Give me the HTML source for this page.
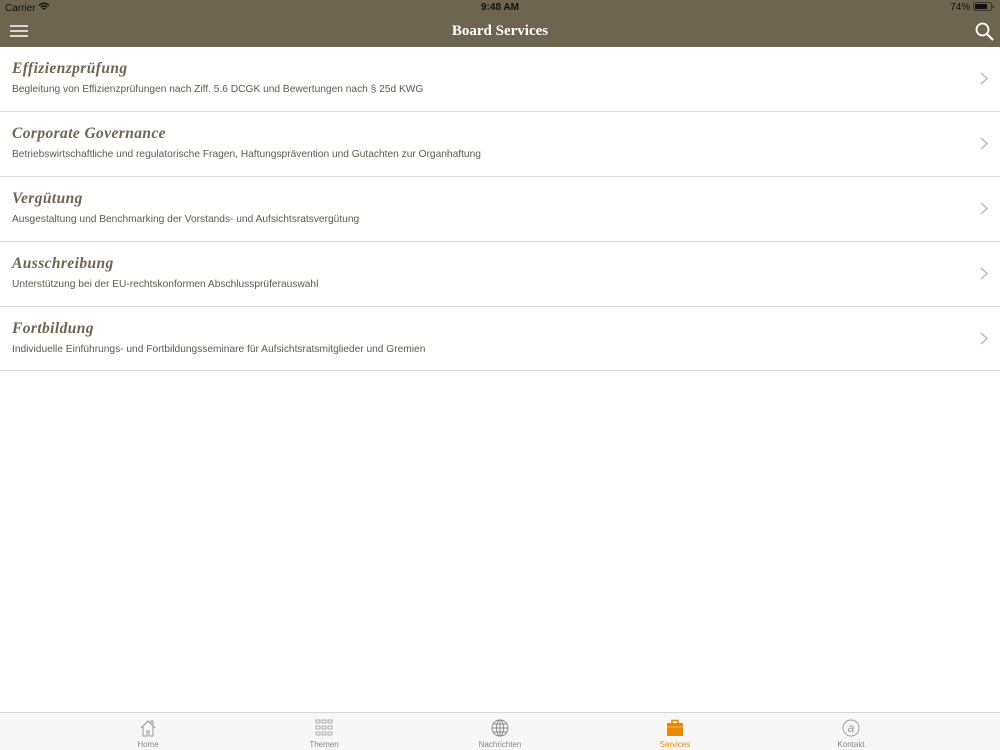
<!DOCTYPE html>
<html><head><meta charset="utf-8"><style>
*{margin:0;padding:0;box-sizing:border-box}
body{width:1000px;height:750px;background:#fff;font-family:"Liberation Sans",sans-serif;position:relative;overflow:hidden}
.top{position:absolute;left:0;top:0;width:1000px;height:47px;background:#6d6550}
.sb{position:absolute;top:2px;font-size:10px;color:#111}
.title{position:absolute;top:23px;left:0;width:1000px;text-align:center;color:#fff;font-family:"Liberation Serif",serif;font-weight:bold;font-size:15px}
.row{position:absolute;left:0;width:1000px;height:65px;border-bottom:1px solid #dcdcdc}
.row h2{position:absolute;left:12px;top:13px;font-family:"Liberation Serif",serif;font-style:italic;font-weight:bold;font-size:15.5px;color:#6d6550;letter-spacing:.4px}
.row p{position:absolute;left:12px;top:37px;font-size:10.2px;color:#5e5a4c}
.row svg{position:absolute;right:12px;top:25px}
.tab{position:absolute;top:712px;left:0;width:1000px;height:38px;background:#f7f7f7;border-top:1px solid #d8d8d8}
.t{position:absolute;top:0;width:80px;text-align:center;font-size:8px;color:#888}
.t svg{display:block;margin:6px auto 3px}
</style></head><body>
<div class="top">
<div class="sb" style="left:5px">Carrier <svg width="12" height="9" viewBox="0 0 12 9"><path d="M1 3.5Q6 -1 11 3.5M2.8 5.3Q6 2.5 9.2 5.3M4.6 7Q6 6 7.4 7" stroke="#111" stroke-width="1.4" fill="none"/></svg></div>
<div class="sb" style="left:0;width:1000px;text-align:center;font-weight:bold">9:48 AM</div>
<div class="sb" style="right:5px">74% <svg width="22" height="9" viewBox="0 0 22 9" style="vertical-align:-1px"><rect x=".5" y=".5" width="18" height="8" rx="2" fill="none" stroke="#333"/><rect x="2" y="2" width="12" height="5" fill="#111"/><rect x="19.5" y="3" width="1.5" height="3" fill="#333"/></svg></div>
<svg style="position:absolute;left:10px;top:25px" width="18" height="12"><path d="M0 1H18M0 6H18M0 11H18" stroke="#fff" stroke-width="1.6"/></svg>
<div class="title">Board Services</div>
<svg style="position:absolute;left:975px;top:22px" width="19" height="19" viewBox="0 0 19 19"><circle cx="7.5" cy="7.5" r="6" stroke="#fff" stroke-width="1.8" fill="none"/><path d="M12 12L18 18" stroke="#fff" stroke-width="2"/></svg>
</div>

<div class="row" style="top:47px"><h2>Effizienzprüfung</h2><p>Begleitung von Effizienzprüfungen nach Ziff. 5.6 DCGK und Bewertungen nach § 25d KWG</p><svg width="8" height="13"><path d="M1 1L7 6.5L1 12" stroke="#bbb" stroke-width="1.5" fill="none"/></svg></div>
<div class="row" style="top:112px"><h2>Corporate Governance</h2><p>Betriebswirtschaftliche und regulatorische Fragen, Haftungsprävention und Gutachten zur Organhaftung</p><svg width="8" height="13"><path d="M1 1L7 6.5L1 12" stroke="#bbb" stroke-width="1.5" fill="none"/></svg></div>
<div class="row" style="top:177px"><h2>Vergütung</h2><p>Ausgestaltung und Benchmarking der Vorstands- und Aufsichtsratsvergütung</p><svg width="8" height="13"><path d="M1 1L7 6.5L1 12" stroke="#bbb" stroke-width="1.5" fill="none"/></svg></div>
<div class="row" style="top:242px"><h2>Ausschreibung</h2><p>Unterstützung bei der EU-rechtskonformen Abschlussprüferauswahl</p><svg width="8" height="13"><path d="M1 1L7 6.5L1 12" stroke="#bbb" stroke-width="1.5" fill="none"/></svg></div>
<div class="row" style="top:307px;height:64px"><h2>Fortbildung</h2><p>Individuelle Einführungs- und Fortbildungsseminare für Aufsichtsratsmitglieder und Gremien</p><svg width="8" height="13"><path d="M1 1L7 6.5L1 12" stroke="#bbb" stroke-width="1.5" fill="none"/></svg></div>

<div class="tab">
<div class="t" style="left:108px"><svg width="18" height="18" viewBox="0 0 18 18"><path d="M2 9L9 2L16 9M4 7V17H8V12H10V17H14V7M12 4V2H14V6" stroke="#999" fill="none"/></svg>Home</div>
<div class="t" style="left:284px"><svg width="18" height="18" viewBox="0 0 18 18" fill="none" stroke="#999" stroke-width=".8"><rect x="1" y="1" width="4" height="3"/><rect x="7" y="1" width="4" height="3"/><rect x="13" y="1" width="4" height="3"/><rect x="1" y="7" width="4" height="3"/><rect x="7" y="7" width="4" height="3"/><rect x="13" y="7" width="4" height="3"/><rect x="1" y="13" width="4" height="3"/><rect x="7" y="13" width="4" height="3"/><rect x="13" y="13" width="4" height="3"/></svg>Themen</div>
<div class="t" style="left:460px"><svg width="18" height="18" viewBox="0 0 18 18" fill="none" stroke="#888" stroke-width=".9"><circle cx="9" cy="9" r="8"/><ellipse cx="9" cy="9" rx="3.5" ry="8"/><path d="M9 1V17M1 9H17M2.5 5H15.5M2.5 13H15.5"/></svg>Nachrichten</div>
<div class="t" style="left:635px;color:#e88a00"><svg width="18" height="18" viewBox="0 0 18 18"><rect x="1" y="4" width="16" height="13" fill="#e88a00"/><path d="M6 4V1.5H12V4" stroke="#e88a00" stroke-width="1.5" fill="none"/><path d="M1 8H17" stroke="#f7c070" stroke-width=".8"/></svg>Services</div>
<div class="t" style="left:811px"><svg width="18" height="18" viewBox="0 0 18 18"><circle cx="9" cy="9" r="8" stroke="#999" fill="none" stroke-width=".9"/><text x="9" y="13" font-size="12" text-anchor="middle" fill="#999" font-family="Liberation Sans" font-style="italic">a</text></svg>Kontakt</div>
</div>
</body></html>
